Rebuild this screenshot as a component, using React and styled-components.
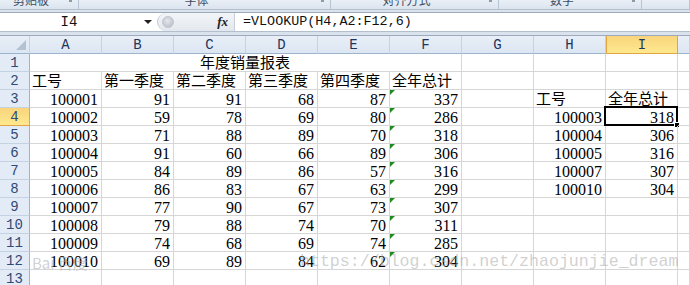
import React from 'react';
import styled, { createGlobalStyle } from 'styled-components';

const GlobalStyle = createGlobalStyle`
  html, body {
    margin: 0;
    padding: 0;
    background: #fff;
    overflow: hidden;
  }
`;

const CJK = '"Noto Sans CJK SC", "Noto Sans", sans-serif';
const NUM = '"Liberation Serif", "DejaVu Serif", serif';
const MONO = '"Liberation Mono", "DejaVu Sans Mono", monospace';

const Page = styled.div`
  position: relative;
  width: 690px;
  height: 285px;
  overflow: hidden;
  background: #fff;
`;

/* ribbon group labels, only their lower half shows */
const Ribbon = styled.div`
  display: flex;
  height: 9px;
  background: linear-gradient(#e9eff6, #dbe4ef);
  overflow: hidden;
`;

const RibbonGroup = styled.div`
  position: relative;
  width: ${(p) => p.$w}px;
  flex: ${(p) => (p.$w ? 'none' : 1)};
  border-right: 1px solid #b7c4d4;
  padding-right: 16px;
  box-sizing: border-box;
  text-align: center;
  font-family: ${CJK};
  font-size: 12px;
  line-height: 16px;
  color: #3e4d60;
  span {
    display: block;
    margin-top: -8px;
  }
  &::after {
    content: '';
    display: ${(p) => (p.$w ? 'block' : 'none')};
    position: absolute;
    right: 6px;
    top: 0;
    width: 3px;
    height: 2px;
    background: #8e9aa8;
  }
`;

const Band = styled.div`
  height: ${(p) => p.$h}px;
  box-sizing: border-box;
  border-top: 1px solid #b3bfcd;
  border-bottom: 1px solid #9daabb;
  background: #d9e2ed;
`;

const FormulaBar = styled.div`
  display: flex;
  height: 18px;
  background: #fff;
`;

const NameBox = styled.div`
  display: flex;
  align-items: center;
  width: 157px;
  flex: none;
  font-family: ${MONO};
  font-size: 14px;
  color: #111;
`;

const NameText = styled.div`
  width: 138px;
  text-align: center;
`;

const Arrow = styled.div`
  width: 0;
  height: 0;
  margin-left: 6px;
  border-left: 4px solid transparent;
  border-right: 4px solid transparent;
  border-top: 4px solid #222;
`;

const FxPanel = styled.div`
  display: flex;
  align-items: center;
  width: 77px;
  flex: none;
  box-sizing: border-box;
  background: linear-gradient(#f3f5f8, #e3e8ee);
  border-radius: 9px 0 0 9px;
  border-left: 1px solid #c2c9d2;
`;

const Fx = styled.span`
  margin-left: auto;
  margin-right: 6px;
  font-family: ${NUM};
  font-style: italic;
  font-weight: bold;
  font-size: 13px;
  color: #222;
`;

const FormulaInput = styled.div`
  flex: 1;
  border-left: 1px solid #c7ced7;
  padding-left: 8px;
  font-family: ${MONO};
  font-size: 13.4px;
  line-height: 18px;
  color: #111;
`;

const Sheet = styled.div`
  display: grid;
  grid-template-columns: 30px repeat(9, 72px) 1fr;
  grid-auto-rows: 18px;
`;

const ColHead = styled.div`
  box-sizing: border-box;
  border-right: 1px solid ${(p) => (p.$sel ? '#e1a542' : '#c5d2e2')};
  border-bottom: 1px solid ${(p) => (p.$sel ? '#e1a542' : '#9eb3cc')};
  border-left: ${(p) => (p.$sel ? '1px solid #e1a542' : 'none')};
  background: ${(p) =>
    p.$sel ? 'linear-gradient(#f8d57c, #ffe88f)' : 'linear-gradient(#e8eff8, #dce6f2)'};
  text-align: center;
  font-family: ${MONO};
  font-size: 14px;
  line-height: 18px;
  color: #1d3558;
`;

const Corner = styled(ColHead)`
  position: relative;
  &::after {
    content: '';
    position: absolute;
    right: 3px;
    bottom: 3px;
    border-left: 10px solid transparent;
    border-bottom: 10px solid #b4c1d1;
  }
`;

const RowHead = styled.div`
  box-sizing: border-box;
  border-right: 1px solid ${(p) => (p.$sel ? '#e1a542' : '#9eb3cc')};
  border-bottom: 1px solid ${(p) => (p.$sel ? '#e1a542' : '#c5d2e2')};
  background: ${(p) => (p.$sel ? 'linear-gradient(#f8d57c, #ffe88f)' : '#e3ebf6')};
  text-align: center;
  font-family: ${MONO};
  font-size: 14px;
  line-height: 18px;
  color: #2f4a78;
`;

const Cell = styled.div`
  position: relative;
  box-sizing: border-box;
  grid-column: ${(p) => (p.$span ? `span ${p.$span}` : 'auto')};
  border-right: 1px solid #d6d6d6;
  border-bottom: 1px solid #d6d6d6;
  padding: 0 3px 0 2px;
  text-align: ${(p) => p.$align || 'left'};
  font-family: ${(p) => (p.$cjk ? CJK : NUM)};
  font-size: ${(p) => (p.$cjk ? '15px' : '16px')};
  line-height: ${(p) => (p.$cjk ? '16px' : '19px')};
  color: #000;
  white-space: nowrap;
  &::before {
    content: '';
    display: ${(p) => (p.$flag ? 'block' : 'none')};
    position: absolute;
    left: 0;
    top: 0;
    border-top: 5px solid #1f8a1f;
    border-right: 5px solid transparent;
  }
`;

const ActiveBox = styled.div`
  position: absolute;
  left: -2px;
  top: -2px;
  right: -1px;
  bottom: -1px;
  border: 2px solid #000;
  &::after {
    content: '';
    position: absolute;
    right: -4px;
    bottom: -4px;
    width: 4px;
    height: 4px;
    background: #000;
    border: 1px solid #fff;
  }
`;

const Watermark = styled.div`
  position: absolute;
  left: ${(p) => p.$x}px;
  top: ${(p) => p.$y}px;
  font-family: ${(p) => (p.$cjk ? CJK : MONO)};
  font-size: ${(p) => p.$size}px;
  color: rgba(170, 170, 170, 0.55);
  white-space: nowrap;
  pointer-events: none;
`;

const cols = ['A', 'B', 'C', 'D', 'E', 'F', 'G', 'H', 'I'];

const data = [
  [100001, 91, 91, 68, 87, 337],
  [100002, 59, 78, 69, 80, 286],
  [100003, 71, 88, 89, 70, 318],
  [100004, 91, 60, 66, 89, 306],
  [100005, 84, 89, 86, 57, 316],
  [100006, 86, 83, 67, 63, 299],
  [100007, 77, 90, 67, 73, 307],
  [100008, 79, 88, 74, 70, 311],
  [100009, 74, 68, 69, 74, 285],
  [100010, 69, 89, 84, 62, 304],
];

const lookup = [
  [100003, 318],
  [100004, 306],
  [100005, 316],
  [100007, 307],
  [100010, 304],
];

const headers = ['工号', '第一季度', '第二季度', '第三季度', '第四季度', '全年总计'];

const App = () => {
  const rows = [];

  // row 1: merged title
  rows.push(
    <React.Fragment key="r1">
      <RowHead>1</RowHead>
      <Cell $span={6} $align="center" $cjk>年度销量报表</Cell>
      <Cell /><Cell /><Cell /><Cell />
    </React.Fragment>
  );

  // row 2: headers
  rows.push(
    <React.Fragment key="r2">
      <RowHead>2</RowHead>
      {headers.map((h) => (
        <Cell key={h} $cjk>{h}</Cell>
      ))}
      <Cell /><Cell /><Cell /><Cell />
    </React.Fragment>
  );

  data.forEach((r, i) => {
    const n = i + 3;
    let h = null;
    let v = null;
    if (n === 3) {
      h = <Cell $cjk>工号</Cell>;
      v = <Cell $cjk>全年总计</Cell>;
    } else if (lookup[n - 4]) {
      h = <Cell $align="right">{lookup[n - 4][0]}</Cell>;
      v = (
        <Cell $align="right">
          {lookup[n - 4][1]}
          {n === 4 && <ActiveBox />}
        </Cell>
      );
    } else {
      h = <Cell />;
      v = <Cell />;
    }
    rows.push(
      <React.Fragment key={n}>
        <RowHead $sel={n === 4}>{n}</RowHead>
        {r.map((x, j) => (
          <Cell key={j} $align="right" $flag={j === 5}>{x}</Cell>
        ))}
        <Cell />
        {h}
        {v}
        <Cell />
      </React.Fragment>
    );
  });

  rows.push(
    <React.Fragment key="r13">
      <RowHead>13</RowHead>
      {cols.map((c) => (
        <Cell key={c} />
      ))}
      <Cell />
    </React.Fragment>
  );

  return (
    <Page>
      <GlobalStyle />
      <Ribbon>
        <RibbonGroup $w={79}><span>剪贴板</span></RibbonGroup>
        <RibbonGroup $w={252}><span>字体</span></RibbonGroup>
        <RibbonGroup $w={168}><span>对齐方式</span></RibbonGroup>
        <RibbonGroup $w={143}><span>数字</span></RibbonGroup>
        <RibbonGroup />
      </Ribbon>
      <Band $h={4} />
      <FormulaBar>
        <NameBox>
          <NameText>I4</NameText>
          <Arrow />
        </NameBox>
        <FxPanel>
          <svg width="14" height="14" viewBox="0 0 14 14" style={{ marginLeft: 3 }}>
            <defs>
              <radialGradient id="knob" cx="0.45" cy="0.4" r="0.6">
                <stop offset="0" stopColor="#e6e9ee" />
                <stop offset="1" stopColor="#b9c0c9" />
              </radialGradient>
            </defs>
            <circle cx="7" cy="7" r="5.5" fill="url(#knob)" stroke="#c3c9d1" />
          </svg>
          <Fx>fx</Fx>
        </FxPanel>
        <FormulaInput>=VLOOKUP(H4,A2:F12,6)</FormulaInput>
      </FormulaBar>
      <Band $h={5} />
      <Sheet>
        <Corner />
        {cols.map((c) => (
          <ColHead key={c} $sel={c === 'I'}>{c}</ColHead>
        ))}
        <ColHead />
        {rows}
      </Sheet>
      <Watermark $x={32} $y={252} $size={15} $cjk>Bai 百度</Watermark>
      <Watermark $x={300} $y={252} $size={16.6}>https://blog.csdn.net/zhaojunjie_dream</Watermark>
    </Page>
  );
};

export default App;
